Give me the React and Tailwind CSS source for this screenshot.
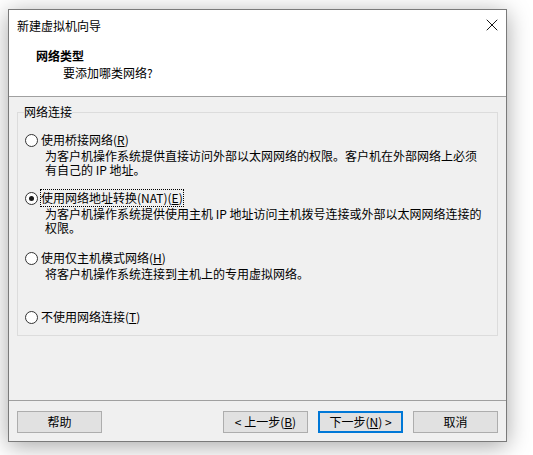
import { X } from 'lucide-react';

function Radio({ checked }) {
  return (
    <span className="w-[13px] h-[13px] rounded-full border border-[#333] bg-white flex items-center justify-center shrink-0">
      {checked && <span className="w-[5px] h-[5px] rounded-full bg-[#1a1a1a]" />}
    </span>
  );
}

function Option({ checked, focused, label, keyChar, lines, className }) {
  return (
    <div className={className}>
      <div className="flex items-center h-[16px] gap-[3px]">
        <Radio checked={checked} />
        <span className={`leading-[16px] whitespace-nowrap ${focused ? 'outline outline-1 outline-dotted outline-black' : ''}`}>
          {label}(<span className="underline underline-offset-1">{keyChar}</span>)
        </span>
      </div>
      {lines && (
        <div className="pl-[20px] mt-[1px] leading-[14px]">
          {lines.map((line) => (
            <div key={line} className="whitespace-nowrap">{line}</div>
          ))}
        </div>
      )}
    </div>
  );
}

function Button({ children, primary }) {
  return (
    <button
      className={`w-[85px] h-[22px] flex items-center justify-center bg-[#e1e1e1] text-[12px] leading-[14px] text-black ${
        primary ? 'border-2 border-[#0078d7]' : 'border border-[#adadad]'
      }`}
    >
      {children}
    </button>
  );
}

export default function App() {
  return (
    <div className="w-[533px] h-[455px] bg-white overflow-hidden pt-[9px] pl-[8px] font-['Noto_Sans_CJK_SC',sans-serif] text-[12px] text-black">
      <div className="w-[499px] h-[433px] border border-[#7a7a7a] bg-white shadow-[0_4px_22px_rgba(0,0,0,0.35)] flex flex-col">
        {/* title bar */}
        <div className="h-[30px] flex items-center justify-between pl-[8px] pr-[4px] shrink-0">
          <span className="leading-[16px] pt-[1px]">新建虚拟机向导</span>
          <X size={20} strokeWidth={1.1} className="text-black" />
        </div>

        {/* header */}
        <div className="h-[57px] border-b border-[#a0a0a0] shrink-0 pt-[8px]">
          <div className="pl-[27px] font-bold leading-[16px]">网络类型</div>
          <div className="pl-[54px] leading-[16px] mt-[1px]">要添加哪类网络?</div>
        </div>

        {/* body */}
        <div className="h-[304px] border-b border-[#a0a0a0] bg-[#f0f0f0] shrink-0 pt-[8px] px-[8px]">
          <fieldset className="border border-[#dcdcdc] px-[7px] pb-[10px]">
            <legend className="leading-[14px] px-0 -ml-[1px]">网络连接</legend>
            <Option
              className="mt-[13px]"
              label="使用桥接网络"
              keyChar="R"
              lines={['为客户机操作系统提供直接访问外部以太网网络的权限。客户机在外部网络上必须', '有自己的 IP 地址。']}
            />
            <Option
              className="mt-[13px]"
              checked
              focused
              label="使用网络地址转换(NAT)"
              keyChar="E"
              lines={['为客户机操作系统提供使用主机 IP 地址访问主机拨号连接或外部以太网网络连接的', '权限。']}
            />
            <Option
              className="mt-[15px]"
              label="使用仅主机模式网络"
              keyChar="H"
              lines={['将客户机操作系统连接到主机上的专用虚拟网络。']}
            />
            <Option className="mt-[28px]" label="不使用网络连接" keyChar="T" />
          </fieldset>
        </div>

        {/* footer */}
        <div className="h-[40px] bg-[#f0f0f0] flex items-start pt-[10px] pl-[8px] pr-[8px]">
          <Button>帮助</Button>
          <div className="flex-1" />
          <div className="flex gap-[10px]">
            <Button>
              &lt; 上一步(<span className="underline underline-offset-1">B</span>)
            </Button>
            <Button primary>
              下一步(<span className="underline underline-offset-1">N</span>) &gt;
            </Button>
            <Button>取消</Button>
          </div>
        </div>
      </div>
    </div>
  );
}
